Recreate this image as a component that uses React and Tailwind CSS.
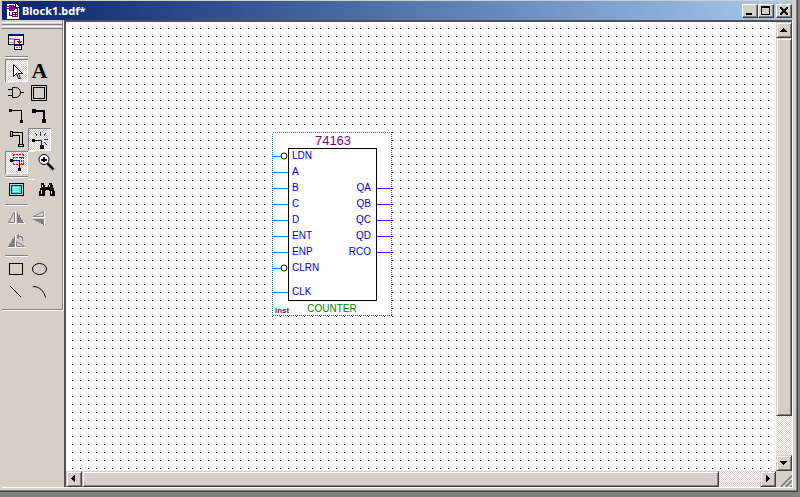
import React from "react";

const raised =
  "border border-t-[#d4d0c8] border-l-[#d4d0c8] border-r-[#404040] border-b-[#404040] shadow-[inset_1px_1px_0_#fff,inset_-1px_-1px_0_#808080] bg-[#d4d0c8]";
const dither =
  "bg-[repeating-conic-gradient(#d4d0c8_0_25%,#fff_0_50%)] bg-[length:2px_2px]";

function Tool({ label, pressed, children }) {
  return (
    <button
      type="button"
      aria-label={label}
      aria-pressed={pressed ? true : undefined}
      className={
        "size-[23px] shrink-0 " +
        (pressed
          ? dither + " shadow-[inset_1px_1px_0_#808080,inset_-1px_-1px_0_#fff]"
          : "")
      }
    >
      {children}
    </button>
  );
}

function Icon({ children }) {
  return (
    <svg
      width="23"
      height="23"
      viewBox="0 0 23 23"
      fill="none"
      stroke="#000"
      shapeRendering="crispEdges"
      className="block overflow-visible"
      aria-hidden="true"
    >
      {children}
    </svg>
  );
}

function Row({ children }) {
  return <div className="flex">{children}</div>;
}

function Separator() {
  return (
    <div className="flex h-[5px] flex-col justify-center">
      <div className="h-[2px] w-[23px] border-t border-b border-t-[#808080] border-b-white" />
    </div>
  );
}

function Spacer() {
  return <div className="w-[7px] border-t border-white" />;
}

function Toolbar() {
  return (
    <aside className="w-[62px] shrink-0">
      <div className="w-[61px] border-r border-b border-[#808080] pb-[5px] shadow-[1px_1px_0_#fff]">
        <div className="flex h-[11px] flex-col gap-[1px] pt-[2px]">
          <div className="h-[3px] border-t border-b border-t-white border-b-[#808080]" />
          <div className="h-[3px] border-t border-b border-t-white border-b-[#808080]" />
        </div>
        <div className="pl-[3px]">
          <Row>
            <Tool label="Detach window">
              <Icon>
                <rect x="3.5" y="3.5" width="15" height="10" fill="#fff" />
                <path d="M3 4h16" stroke="#000080" strokeWidth="2" />
                <path d="M4 7.5h5M4 8.5h5M4 11.5h5" stroke="#a0a0a0" />
                <path d="M9.5 13V8.5h5v3M12 10.5h5M13 11.5h3M14 12.5h1" stroke="#e00000" />
                <rect x="9.5" y="13.5" width="7" height="5" fill="#fff" stroke="#000080" />
                <path d="M9 14h8" stroke="#000080" strokeWidth="2" />
                <path d="M11 16.5h2M14 16.5h1" stroke="#606060" />
              </Icon>
            </Tool>
          </Row>
          <Separator />
          <Row>
            <Tool label="Selection tool" pressed>
              <Icon>
                <path
                  d="M8.5 5.5v12l3-3 2 5h2l-2-5h4z"
                  fill="#fff"
                  shapeRendering="auto"
                />
              </Icon>
            </Tool>
            <Tool label="Text tool">
              <span className="block font-['Liberation_Serif',serif] text-[22px] leading-[23px] font-bold text-black">
                A
              </span>
            </Tool>
          </Row>
          <Row>
            <Tool label="Symbol tool">
              <Icon>
                <path d="M3 7.5h4M3 13.5h4M15 10.5h4" />
                <path d="M7.5 5.5h3a5 5 0 0 1 0 10h-3z" shapeRendering="auto" />
              </Icon>
            </Tool>
            <Tool label="Block tool">
              <Icon>
                <rect x="3.5" y="3.5" width="15" height="15" />
                <rect x="5.5" y="5.5" width="11" height="11" />
              </Icon>
            </Tool>
          </Row>
          <Row>
            <Tool label="Orthogonal node tool">
              <Icon>
                <path d="M7 5.5h9.5v10" />
                <path d="M4 4h3v3H4zM15 15h3v3h-3z" fill="#000" stroke="none" />
              </Icon>
            </Tool>
            <Tool label="Orthogonal bus tool">
              <Icon>
                <path d="M6 6h10v10" strokeWidth="2" />
                <path d="M4 4h4v4H4zM14 14h4v4h-4z" fill="#000" stroke="none" />
              </Icon>
            </Tool>
          </Row>
          <Row>
            <Tool label="Orthogonal conduit tool">
              <Icon>
                <path d="M7.5 4.5h10v12h-3v-9h-7M5.5 3.5h2v5h-2zM13.5 16.5h5v2h-5z" />
              </Icon>
            </Tool>
            <Tool label="Rubberbanding" pressed>
              <Icon>
                <path d="M6 12.5h7.5v6" />
                <path d="M4 11h3v3H4zM12 17h4v4h-4z" fill="#000" stroke="none" />
                <path
                  d="M12.5 4v4M7.5 5.5l2 3M17.5 5.5l-2 3M16 11.5h4M16 14.5l3 2"
                  stroke="#2020e0"
                />
              </Icon>
            </Tool>
          </Row>
          <Row>
            <Tool label="Partial line selection" pressed>
              <Icon>
                <path
                  d="M8 3.5h11M8 6.5h11M8 13.5h11"
                  stroke="#f00000"
                  strokeDasharray="2 1"
                />
                <path
                  d="M8.5 3v11M18.5 3v11M16.5 6v8"
                  stroke="#f00000"
                  strokeDasharray="2 1"
                />
                <path d="M7 9.5h3M14.5 14v3" />
                <path d="M10 9.5h4.5v5" stroke="#0000e0" />
                <path d="M5 8h3v3H5zM13 17h3v3h-3z" fill="#000" stroke="none" />
              </Icon>
            </Tool>
            <Spacer />
            <Tool label="Zoom tool">
              <Icon>
                <g shapeRendering="auto">
                  <circle cx="9" cy="8.5" r="5" fill="#fff" />
                  <path d="M12.5 12.5l6 6" strokeWidth="2.5" />
                </g>
                <path d="M6 8.5h6M9 6v5" strokeWidth="2" />
              </Icon>
            </Tool>
          </Row>
          <Separator />
          <Row>
            <Tool label="Full screen">
              <Icon>
                <rect x="4.5" y="4.5" width="14" height="12" fill="#b8d8d8" />
                <rect x="6.5" y="6.5" width="10" height="8" fill="#50d8d8" stroke="#004040" />
                <path d="M8 8.5h6M8 10.5h6M8 12.5h6" stroke="#d0ffff" />
              </Icon>
            </Tool>
            <Spacer />
            <Tool label="Find">
              <Icon>
                <path
                  d="M6 4h3v2h1v2h3V6h1V4h3v2h1v3h1v3h1v5h-5v-5h-1v-1h-3v1h-1v5H4v-5h1V9h1z"
                  fill="#000"
                  stroke="none"
                />
                <path d="M7.5 6v2M6.5 11v4M14.5 6v2M16.5 12v3" stroke="#fff" />
              </Icon>
            </Tool>
          </Row>
          <Separator />
          <Row>
            <Tool label="Flip horizontal">
              <Icon>
                <path d="M13 5v12h7z" fill="#fff" stroke="none" />
                <path d="M9.5 5v10.5h-6z" fill="#d4d0c8" stroke="#808080" shapeRendering="auto" />
                <path d="M4 16.5h6.5V4" stroke="#fff" />
                <path d="M12 4v12h7z" fill="#808080" stroke="none" />
              </Icon>
            </Tool>
            <Tool label="Flip vertical">
              <Icon>
                <path d="M15.5 4.5v5H5z" stroke="#808080" shapeRendering="auto" />
                <path d="M5 10.5h11.5V4" stroke="#fff" />
                <path d="M5 12h12v7z" fill="#fff" stroke="none" />
                <path d="M4 12h12v6z" fill="#808080" stroke="none" />
              </Icon>
            </Tool>
          </Row>
          <Row>
            <Tool label="Rotate left">
              <Icon>
                <path d="M10 5v12H3z" fill="#808080" stroke="none" />
                <path d="M10.5 5v12.5H3" stroke="#fff" />
                <path d="M11.5 11.5v5h8z" stroke="#808080" shapeRendering="auto" />
                <path d="M11 17.5h9" stroke="#fff" />
                <path d="M12 6.5h4v1h1v3M12 6.5l2-2M12 6.5l2 2" stroke="#808080" />
              </Icon>
            </Tool>
          </Row>
          <Separator />
          <Row>
            <Tool label="Rectangle tool">
              <Icon>
                <rect x="4.5" y="5.5" width="13" height="11" />
              </Icon>
            </Tool>
            <Tool label="Oval tool">
              <Icon>
                <ellipse cx="11.5" cy="11" rx="7" ry="5.5" shapeRendering="auto" />
              </Icon>
            </Tool>
          </Row>
          <Row>
            <Tool label="Line tool">
              <Icon>
                <path d="M5.5 5.5l11 11" />
              </Icon>
            </Tool>
            <Tool label="Arc tool">
              <Icon>
                <path d="M5 5.5c6 0 11 4 12.5 11" shapeRendering="auto" />
              </Icon>
            </Tool>
          </Row>
        </div>
      </div>
    </aside>
  );
}

const inputs = [
  ["LDN", 24, true],
  ["A", 40],
  ["B", 56],
  ["C", 72],
  ["D", 88],
  ["ENT", 104],
  ["ENP", 120],
  ["CLRN", 136, true],
  ["CLK", 160],
];
const outputs = [
  ["QA", 56],
  ["QB", 72],
  ["QC", 88],
  ["QD", 104],
  ["RCO", 120],
];

function CounterSymbol() {
  return (
    <svg
      width="120"
      height="184"
      viewBox="0 0 120 184"
      className="absolute top-[110px] left-[206px] font-['Liberation_Sans',Arial,sans-serif] text-[10px]"
      role="img"
      aria-label="74163 counter"
    >
      <rect width="120" height="184" fill="#fff" />
      <g fill="none" shapeRendering="crispEdges">
        <rect x="0.5" y="0.5" width="119" height="183" stroke="#008080" strokeDasharray="1 1" />
        <rect x="16.5" y="16.5" width="88" height="152" stroke="#000" />
      </g>
      <text x="61" y="13" textAnchor="middle" fill="#800080" className="text-[13px]">
        74163
      </text>
      {inputs.map(([name, y, inverted]) => (
        <g key={name}>
          <path
            d={`M0 ${y + 0.5}H${inverted ? 9 : 16}`}
            stroke="#0080ff"
            shapeRendering="crispEdges"
          />
          {inverted && <circle cx="12" cy={y} r="3" fill="#fff" stroke="#000" />}
          <text x="20" y={y + 3} fill="#0000e0">
            {name}
          </text>
        </g>
      ))}
      {outputs.map(([name, y]) => (
        <g key={name}>
          <path d={`M105 ${y + 0.5}h15`} stroke="#8000ff" shapeRendering="crispEdges" />
          <text x="99" y={y + 3} textAnchor="end" fill="#0000e0">
            {name}
          </text>
        </g>
      ))}
      <text x="60" y="180" textAnchor="middle" fill="#008000">
        COUNTER
      </text>
      <text x="3" y="181" fill="#800080" className="text-[8px] font-bold">
        inst
      </text>
    </svg>
  );
}

function ArrowButton({ label, d }) {
  return (
    <button type="button" aria-label={label} className={"size-[16px] shrink-0 " + raised}>
      <svg
        width="14"
        height="14"
        viewBox="0 0 14 14"
        shapeRendering="crispEdges"
        className="block"
        aria-hidden="true"
      >
        <path d={d} />
      </svg>
    </button>
  );
}

function CaptionButton({ label, children }) {
  return (
    <button
      type="button"
      aria-label={label}
      className="h-[14px] w-[16px] border border-t-white border-l-white border-r-[#404040] border-b-[#404040] bg-[#d4d0c8] shadow-[inset_-1px_-1px_0_#808080]"
    >
      <svg
        width="14"
        height="12"
        viewBox="0 0 14 12"
        fill="none"
        stroke="#000"
        shapeRendering="crispEdges"
        className="block"
        aria-hidden="true"
      >
        {children}
      </svg>
    </button>
  );
}

function TitleBar() {
  return (
    <header className="flex h-[19px] shrink-0 items-center bg-linear-to-r from-[#0a246a] to-[#a6caf0] pl-[4px]">
      <svg
        width="14"
        height="16"
        viewBox="0 0 14 16"
        fill="none"
        shapeRendering="crispEdges"
        aria-hidden="true"
      >
        <path d="M1 1h9l3 3v12H1z" fill="#fff" />
        <path d="M9.5 1v3.5H13" stroke="#000" />
        <path d="M3 2h4l2 2v2L7 8H3V6H0V5h3V4H0V3h3z" fill="#800080" />
        <path d="M9 5.5h2.5v3M6.5 9.5h5v4h-5zM9 9v5M6 11.5h6M3.5 9v3.5h3" stroke="#800080" />
      </svg>
      <h1 className="ml-[2px] flex-1 font-['Noto_Sans',Tahoma,sans-serif] text-[11px] leading-[18px] font-bold text-white">
        Block1.bdf*
      </h1>
      <div className="flex items-center gap-[2px]">
        <div className="flex">
          <CaptionButton label="Minimize">
            <path d="M3 9h6" strokeWidth="2" />
          </CaptionButton>
          <CaptionButton label="Maximize">
            <path d="M2.5 2v7.5h8V2" />
            <path d="M2 2h9" strokeWidth="2" />
          </CaptionButton>
        </div>
        <CaptionButton label="Close">
          <path d="M3 2.5l7 7M4 2.5l7 7M10 2.5l-7 7M11 2.5l-7 7" />
        </CaptionButton>
      </div>
    </header>
  );
}

export default function App() {
  return (
    <div className="h-screen overflow-hidden bg-[#808080] pr-[2px] pb-[5px]">
      <div className="flex h-full flex-col border-r border-b border-[#404040] bg-[#d4d0c8] pt-[1px] pr-[5px] pb-[3px] pl-[2px] shadow-[inset_-1px_-1px_0_#808080]">
        <TitleBar />
        <div className="flex min-h-0 flex-1 border-b border-white shadow-[1px_0_0_#fff]">
          <Toolbar />
          <main className="flex min-w-0 flex-1 flex-col border-t-2 border-l-2 border-[#505050]">
            <div className="flex min-h-0 flex-1">
              <div className="relative min-w-0 flex-1 overflow-hidden bg-white bg-[conic-gradient(from_270deg_at_1px_1px,#000_90deg,transparent_0)] bg-[length:8px_8px] bg-[position:6px_6px]">
                <CounterSymbol />
              </div>
              <div className={"flex w-[16px] flex-col " + dither}>
                <ArrowButton label="Scroll up" d="M6 5h1v1h1v1h1v1h1v1H3V8h1V7h1V6h1z" />
                <div className={"flex-[378] " + raised} />
                <div className="flex-[39]" />
                <ArrowButton label="Scroll down" d="M3 5h7v1H9v1H8v1H7v1H6V8H5V7H4V6H3z" />
              </div>
            </div>
            <div className="flex h-[16px] shrink-0">
              <div className={"flex flex-1 " + dither}>
                <ArrowButton label="Scroll left" d="M8 3v7H7V9H6V8H5V7H4V6h1V5h1V4h1V3z" />
                <div className={"flex-[637] " + raised} />
                <div className="flex-[41]" />
                <ArrowButton label="Scroll right" d="M5 3h1v1h1v1h1v1h1v1H8v1H7v1H6v1H5z" />
              </div>
              <svg width="16" height="16" viewBox="0 0 16 16" fill="none" aria-hidden="true">
                <path d="M3 16L16 3M8 16l8-8M13 16l3-3" stroke="#fff" />
                <path d="M4.5 16L16 4.5M9.5 16L16 9.5M14.5 16l1.5-1.5" stroke="#808080" strokeWidth="2" />
              </svg>
            </div>
          </main>
        </div>
      </div>
    </div>
  );
}
